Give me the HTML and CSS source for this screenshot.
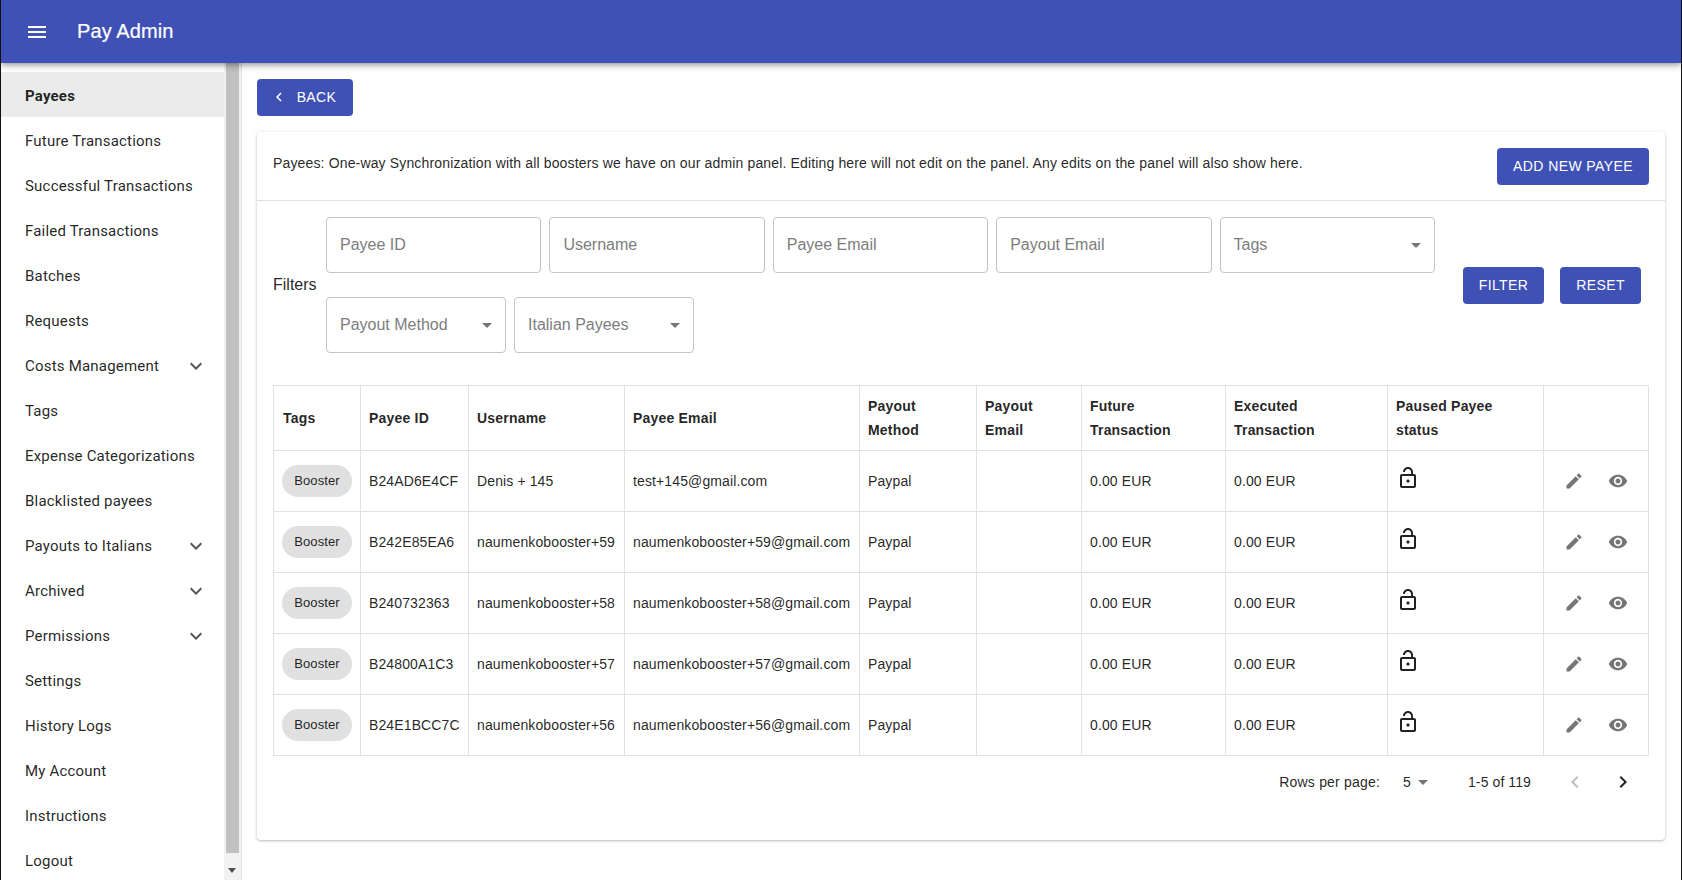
FILE: index.html
```html
<!DOCTYPE html>
<html lang="en">
<head>
<meta charset="utf-8">
<title>Pay Admin</title>
<link rel="stylesheet" href="styles.css">
</head>
<body>
<svg class="sprite" width="0" height="0" aria-hidden="true">
  <defs>
    <symbol id="i-menu" viewBox="0 0 24 24"><path d="M3 18h18v-2H3v2zm0-5h18v-2H3v2zm0-7v2h18V6H3z"/></symbol>
    <symbol id="i-left" viewBox="0 0 24 24"><path d="M15.41 7.41L14 6l-6 6 6 6 1.41-1.41L10.83 12z"/></symbol>
    <symbol id="i-right" viewBox="0 0 24 24"><path d="M10 6L8.59 7.41 13.17 12l-4.58 4.59L10 18l6-6z"/></symbol>
    <symbol id="i-more" viewBox="0 0 24 24"><path d="M16.59 8.59L12 13.17 7.41 8.59 6 10l6 6 6-6z"/></symbol>
    <symbol id="i-drop" viewBox="0 0 24 24"><path d="M7 10l5 5 5-5z"/></symbol>
    <symbol id="i-edit" viewBox="0 0 24 24"><path d="M3 17.25V21h3.75L17.81 9.94l-3.75-3.75L3 17.25zM20.71 7.04c.39-.39.39-1.02 0-1.41l-2.34-2.34a.9959.9959 0 00-1.41 0l-1.83 1.83 3.75 3.75 1.83-1.83z"/></symbol>
    <symbol id="i-eye" viewBox="0 0 24 24"><path d="M12 4.5C7 4.5 2.73 7.61 1 12c1.73 4.39 6 7.5 11 7.5s9.27-3.11 11-7.5c-1.73-4.39-6-7.5-11-7.5zM12 17c-2.76 0-5-2.24-5-5s2.24-5 5-5 5 2.24 5 5-2.24 5-5 5zm0-8c-1.66 0-3 1.34-3 3s1.34 3 3 3 3-1.34 3-3-1.34-3-3-3z"/></symbol>
    <symbol id="i-lock" viewBox="0 0 24 24"><path d="M12 16.6c.9 0 1.6-.7 1.6-1.6s-.7-1.6-1.6-1.6-1.6.7-1.6 1.6.7 1.6 1.6 1.6zm6-8.6h-1V6c0-2.76-2.24-5-5-5S7 3.24 7 6h1.9c0-1.71 1.39-3.1 3.1-3.1 1.71 0 3.1 1.39 3.1 3.1v2H6c-1.1 0-2 .9-2 2v10c0 1.1.9 2 2 2h12c1.1 0 2-.9 2-2V10c0-1.1-.9-2-2-2zm0 12H6V10h12v10z"/></symbol>
  </defs>
</svg>

<header class="topbar">
  <svg class="icon topbar-menu"><use href="#i-menu"/></svg>
  <span class="brand">Pay Admin</span>
</header>

<div class="shell">
  <aside class="sidebar">
    <nav class="nav">
      <a class="nav-item active">Payees</a>
      <a class="nav-item">Future Transactions</a>
      <a class="nav-item">Successful Transactions</a>
      <a class="nav-item">Failed Transactions</a>
      <a class="nav-item">Batches</a>
      <a class="nav-item">Requests</a>
      <a class="nav-item">Costs Management<svg class="icon nav-more"><use href="#i-more"/></svg></a>
      <a class="nav-item">Tags</a>
      <a class="nav-item">Expense Categorizations</a>
      <a class="nav-item">Blacklisted payees</a>
      <a class="nav-item">Payouts to Italians<svg class="icon nav-more"><use href="#i-more"/></svg></a>
      <a class="nav-item">Archived<svg class="icon nav-more"><use href="#i-more"/></svg></a>
      <a class="nav-item">Permissions<svg class="icon nav-more"><use href="#i-more"/></svg></a>
      <a class="nav-item">Settings</a>
      <a class="nav-item">History Logs</a>
      <a class="nav-item">My Account</a>
      <a class="nav-item">Instructions</a>
      <a class="nav-item">Logout</a>
    </nav>
    <div class="scrollbar">
      <div class="scroll-thumb"></div>
      <div class="scroll-arrow"></div>
    </div>
  </aside>

  <main class="main">
    <button class="btn btn-back"><svg class="icon back-icon"><use href="#i-left"/></svg>Back</button>

    <section class="card">
      <div class="card-head">
        <p class="intro">Payees: One-way Synchronization with all boosters we have on our admin panel. Editing here will not edit on the panel. Any edits on the panel will also show here.</p>
        <button class="btn btn-add">Add new payee</button>
      </div>

      <div class="card-body">
        <div class="filters">
          <span class="filters-label">Filters</span>
          <div class="fields">
            <div class="field field-text">Payee ID</div>
            <div class="field field-text">Username</div>
            <div class="field field-text">Payee Email</div>
            <div class="field field-text">Payout Email</div>
            <div class="field field-text">Tags<svg class="icon field-drop"><use href="#i-drop"/></svg></div>
            <div class="field field-select">Payout Method<svg class="icon field-drop"><use href="#i-drop"/></svg></div>
            <div class="field field-select">Italian Payees<svg class="icon field-drop"><use href="#i-drop"/></svg></div>
          </div>
          <div class="filter-actions">
            <button class="btn btn-filter">Filter</button>
            <button class="btn btn-filter">Reset</button>
          </div>
        </div>

        <table class="table">
          <colgroup>
            <col class="c1"><col class="c2"><col class="c3"><col class="c4"><col class="c5">
            <col class="c6"><col class="c7"><col class="c8"><col class="c9"><col class="c10">
          </colgroup>
          <thead>
            <tr>
              <th class="tag-head">Tags</th><th>Payee ID</th><th>Username</th><th>Payee Email</th><th>Payout Method</th>
              <th>Payout Email</th><th>Future Transaction</th><th>Executed Transaction</th><th>Paused Payee status</th><th></th>
            </tr>
          </thead>
          <tbody>
            <tr>
              <td class="tag-cell"><span class="chip">Booster</span></td><td>B24AD6E4CF</td><td>Denis + 145</td><td>test+145@gmail.com</td><td>Paypal</td><td></td><td>0.00 EUR</td><td>0.00 EUR</td>
              <td class="lock-cell"><svg class="icon lock"><use href="#i-lock"/></svg></td>
              <td class="act-cell"><div class="actions"><svg class="icon act"><use href="#i-edit"/></svg><svg class="icon act"><use href="#i-eye"/></svg></div></td>
            </tr>
            <tr>
              <td class="tag-cell"><span class="chip">Booster</span></td><td>B242E85EA6</td><td>naumenkobooster+59</td><td>naumenkobooster+59@gmail.com</td><td>Paypal</td><td></td><td>0.00 EUR</td><td>0.00 EUR</td>
              <td class="lock-cell"><svg class="icon lock"><use href="#i-lock"/></svg></td>
              <td class="act-cell"><div class="actions"><svg class="icon act"><use href="#i-edit"/></svg><svg class="icon act"><use href="#i-eye"/></svg></div></td>
            </tr>
            <tr>
              <td class="tag-cell"><span class="chip">Booster</span></td><td>B240732363</td><td>naumenkobooster+58</td><td>naumenkobooster+58@gmail.com</td><td>Paypal</td><td></td><td>0.00 EUR</td><td>0.00 EUR</td>
              <td class="lock-cell"><svg class="icon lock"><use href="#i-lock"/></svg></td>
              <td class="act-cell"><div class="actions"><svg class="icon act"><use href="#i-edit"/></svg><svg class="icon act"><use href="#i-eye"/></svg></div></td>
            </tr>
            <tr>
              <td class="tag-cell"><span class="chip">Booster</span></td><td>B24800A1C3</td><td>naumenkobooster+57</td><td>naumenkobooster+57@gmail.com</td><td>Paypal</td><td></td><td>0.00 EUR</td><td>0.00 EUR</td>
              <td class="lock-cell"><svg class="icon lock"><use href="#i-lock"/></svg></td>
              <td class="act-cell"><div class="actions"><svg class="icon act"><use href="#i-edit"/></svg><svg class="icon act"><use href="#i-eye"/></svg></div></td>
            </tr>
            <tr>
              <td class="tag-cell"><span class="chip">Booster</span></td><td>B24E1BCC7C</td><td>naumenkobooster+56</td><td>naumenkobooster+56@gmail.com</td><td>Paypal</td><td></td><td>0.00 EUR</td><td>0.00 EUR</td>
              <td class="lock-cell"><svg class="icon lock"><use href="#i-lock"/></svg></td>
              <td class="act-cell"><div class="actions"><svg class="icon act"><use href="#i-edit"/></svg><svg class="icon act"><use href="#i-eye"/></svg></div></td>
            </tr>
          </tbody>
        </table>

        <div class="pager">
          <span class="pager-label">Rows per page:</span>
          <span class="pager-size">5<svg class="icon pager-drop"><use href="#i-drop"/></svg></span>
          <span class="pager-range">1-5 of 119</span>
          <svg class="icon pager-prev"><use href="#i-left"/></svg>
          <svg class="icon pager-next"><use href="#i-right"/></svg>
        </div>
      </div>
    </section>
  </main>
</div>
</body>
</html>
```

FILE: styles.css
```css
* { box-sizing: border-box; }
html, body { height: 100%; }
body {
  margin: 0;
  height: 880px;
  overflow: hidden;
  display: flex;
  flex-direction: column;
  background: #fff;
  border-left: 1px solid #111;
  border-right: 1px solid #111;
  font-family: "Liberation Sans", Arial, sans-serif;
  color: rgba(0,0,0,.87);
}
.sprite { position: absolute; }
.icon { display: block; width: 24px; height: 24px; fill: currentColor; flex: none; }

.topbar {
  position: relative;
  z-index: 2;
  flex: none;
  height: 63px;
  display: flex;
  align-items: center;
  background: #3f51b5;
  color: #fff;
  padding-left: 24px;
  box-shadow: 0 2px 4px -1px rgba(0,0,0,.2), 0 4px 5px 0 rgba(0,0,0,.14), 0 1px 10px 0 rgba(0,0,0,.12);
}
.topbar-menu { margin-right: 28px; }
.brand { font: 400 20px/1 "Liberation Sans", Arial, sans-serif; letter-spacing: .1px; margin-top: -2px; -webkit-text-stroke: .2px #fff; }

.shell { flex: 1; display: flex; min-height: 0; }

.sidebar {
  flex: none;
  width: 241px;
  display: flex;
  border-right: 1px solid #e0e0e0;
  overflow: hidden;
}
.nav { flex: none; width: 223px; padding-top: 9px; }
.nav-item {
  display: flex;
  align-items: center;
  justify-content: space-between;
  height: 45px;
  padding: 3px 16px 0 24px;
  font: 400 15px/1 Roboto, sans-serif;
  letter-spacing: .2px;
  color: rgba(0,0,0,.87);
}
.nav-item.active { background: #ebebeb; font-weight: 700; }
.nav-more { color: #555; margin-top: -1px; }

.scrollbar {
  flex: 1;
  background: #f1f1f1;
  position: relative;
}
.scroll-thumb { width: 13px; margin-left: 2px; height: 790px; background: #c1c1c1; }
.scroll-arrow {
  margin: 15px 0 0 4px;
  width: 0;
  height: 0;
  border-left: 4px solid transparent;
  border-right: 4px solid transparent;
  border-top: 5px solid #505050;
}

.main { flex: 1; min-width: 0; padding: 16px 16px 0 15px; }

.btn {
  display: inline-flex;
  align-items: center;
  justify-content: center;
  border: 0;
  border-radius: 4px;
  background: #3f51b5;
  color: #fff;
  height: 37px;
  padding: 0 0 2px;
  font: 400 14px/1 "Liberation Sans", Arial, sans-serif;
  letter-spacing: .4px;
  text-transform: uppercase;
}
.btn-back { width: 96px; }
.back-icon { width: 18px; height: 18px; margin-right: 9px; margin-left: -4px; }

.card {
  margin-top: 16px;
  height: 708px;
  border-radius: 4px;
  background: #fff;
  box-shadow: 0 1px 3px rgba(0,0,0,.2), 0 1px 1px rgba(0,0,0,.06), 0 0 6px rgba(0,0,0,.05);
}
.card-head {
  height: 69px;
  padding: 16px;
  display: flex;
  justify-content: space-between;
  align-items: flex-start;
  border-bottom: 1px solid #e0e0e0;
}
.intro { margin: 5px 0 0; font-size: 14px; line-height: 20px; letter-spacing: .15px; }
.btn-add { width: 152px; }

.card-body { padding: 16px; }
.filters { display: flex; align-items: center; }
.filters-label { width: 53px; font-size: 16px; }
.fields { width: 1110px; display: flex; flex-wrap: wrap; gap: 24px 8px; }
.field {
  position: relative;
  height: 56px;
  display: flex;
  align-items: center;
  padding: 0 14px 0 13px;
  border: 1px solid #c4c4c4;
  border-radius: 4px;
  color: #7d7d7d;
  font: 400 16px/1 "Liberation Sans", Arial, sans-serif;
}
.field-text { width: 215.4px; }
.field-select { width: 180px; }
.field-drop { position: absolute; right: 6px; top: 15px; color: #757575; }
.filter-actions { flex: 1; display: flex; gap: 16px; margin-left: 27px; }
.btn-filter { width: 81px; padding-bottom: 1px; }

.table {
  width: 1375px;
  margin-top: 32px;
  border-collapse: collapse;
  table-layout: fixed;
  font-size: 14px;
}
.c1 { width: 87px; } .c2 { width: 108px; } .c3 { width: 156px; } .c4 { width: 235px; } .c5 { width: 117px; }
.c6 { width: 105px; } .c7 { width: 144px; } .c8 { width: 162px; } .c9 { width: 156px; } .c10 { width: 105px; }
.table th, .table td { border: 1px solid #e0e0e6; padding: 0 8px; text-align: left; }
.table th { height: 65px; font-size: 14px; font-weight: 700; line-height: 24px; letter-spacing: .2px; }
.table .tag-head { padding-left: 9px; }
.table td { height: 61px; letter-spacing: .12px; white-space: nowrap; }
.chip {
  display: inline-flex;
  align-items: center;
  justify-content: center;
  width: 70px;
  height: 32px;
  border-radius: 16px;
  background: #e0e0e0;
  font: 400 13px/1 "Liberation Sans", Arial, sans-serif;
  padding-bottom: 2px;
}
.lock { margin: -6px 0 0 0; color: rgba(0,0,0,.87); }
.actions { display: flex; gap: 24px; padding-left: 12px; color: #757575; }
.act { width: 20px; height: 20px; }

.pager { display: flex; align-items: center; height: 52px; padding-right: 14px; justify-content: flex-end; font-size: 14px; letter-spacing: .1px; }
.pager-label { margin-right: 23px; letter-spacing: .2px; }
.pager-size { display: flex; align-items: center; margin-right: 33px; font: 400 14px/1 "Liberation Sans", Arial, sans-serif; }
.pager-drop { color: #757575; }
.pager-range { margin-right: 32px; }
.pager-prev { color: #bdbdbd; margin-right: 24px; }
.pager-next { color: rgba(0,0,0,.87); }
```
